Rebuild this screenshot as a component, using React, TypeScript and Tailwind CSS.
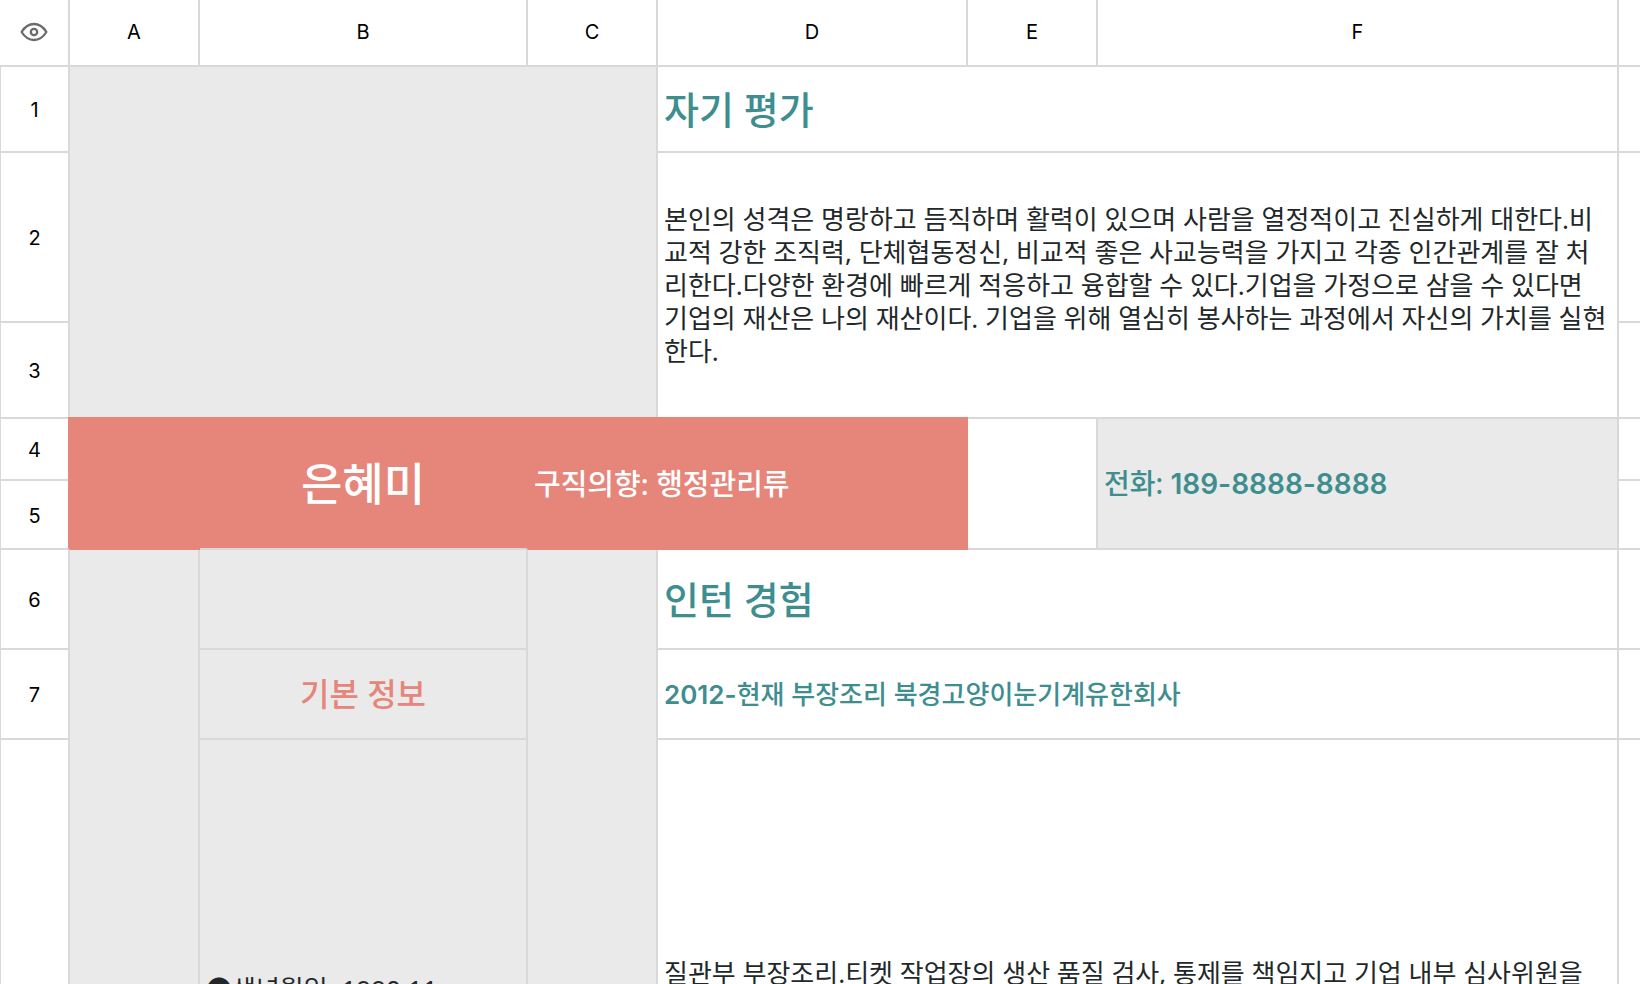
import type { ReactNode } from "react";

const line = "border-r-2 border-b-2 border-[#d9d9d9]";
const edge = "border-b-2 border-[#d9d9d9] bg-white p-0";
const headText = "px-0 text-center align-middle font-[Inter,sans-serif] text-xl font-normal text-black";
const head = `${line} ${headText} pt-0 pb-0.5`;
const gray = `${line} bg-[#eaeaea] p-0`;
const white = `${line} bg-white p-0`;
const coral = "border-r-2 border-b-2 bg-[#e6857a] p-0 text-white shadow-[-2px_-2px_0_#e6857a,0_-2px_0_#e6857a]";

function Lines({ items }: { items: string[] }) {
  return (
    <p className="text-[26px] leading-[33px] whitespace-nowrap text-[#222829]">
      {items.map((t) => (
        <span key={t} className="block">{t}</span>
      ))}
    </p>
  );
}

function RowHead({ children, besideBanner = false }: { children: ReactNode; besideBanner?: boolean }) {
  return (
    <th
      scope="row"
      className={`border-r-2 border-b-2 border-l border-[#d9d9d9] ${headText} pt-0.5 pb-0 ${besideBanner ? "border-r-[#e6857a]" : ""}`}
    >
      {children}
    </th>
  );
}

function Heading({ children }: { children: ReactNode }) {
  return <h2 className="px-1.5 text-[38px] leading-[48px] font-medium text-[#3e8e8f]">{children}</h2>;
}

function Num({ children }: { children: ReactNode }) {
  return <span className="font-[Inter,sans-serif] font-semibold">{children}</span>;
}

const about = [
  "본인의 성격은 명랑하고 듬직하며 활력이 있으며 사람을 열정적이고 진실하게 대한다.비",
  "교적 강한 조직력, 단체협동정신, 비교적 좋은 사교능력을 가지고 각종 인간관계를 잘 처",
  "리한다.다양한 환경에 빠르게 적응하고 융합할 수 있다.기업을 가정으로 삼을 수 있다면",
  "기업의 재산은 나의 재산이다. 기업을 위해 열심히 봉사하는 과정에서 자신의 가치를 실현",
  "한다.",
];

export default function App() {
  return (
    <main className="h-screen overflow-hidden bg-white font-['Noto_Sans','Noto_Sans_CJK_KR',sans-serif]">
      <table className="w-full table-fixed border-separate border-spacing-0">
        <colgroup>
          <col className="w-[70px]" />
          <col className="w-[130px]" />
          <col className="w-[328px]" />
          <col className="w-[130px]" />
          <col className="w-[310px]" />
          <col className="w-[130px]" />
          <col className="w-[521px]" />
          <col />
        </colgroup>
        <thead>
          <tr className="h-[67px]">
            <th className={head}>
              <button type="button" aria-label="보기" className="block w-full">
                <svg viewBox="0 0 28 20" className="mx-auto h-5 w-7" fill="none" stroke="#6b6b6b" strokeWidth="2.3">
                  <path d="M1.600 10C5 4.500 9 2 14 2s9 2.500 12.400 8C23 15.500 19 18 14 18S5 15.500 1.600 10Z" strokeLinejoin="round" />
                  <circle cx="14" cy="10" r="3.200" />
                </svg>
              </button>
            </th>
            {["A", "B", "C", "D", "E", "F"].map((c) => (
              <th key={c} scope="col" className={head}>{c}</th>
            ))}
            <td className={edge} />
          </tr>
        </thead>
        <tbody>
          <tr className="h-[86px]">
            <RowHead>1</RowHead>
            <td colSpan={3} rowSpan={3} className={gray} />
            <td colSpan={3} className={white}>
              <Heading>자기 평가</Heading>
            </td>
            <td className={edge} />
          </tr>
          <tr className="h-[170px]">
            <RowHead>2</RowHead>
            <td colSpan={3} rowSpan={2} className={white}>
              <div className="px-1.5"><Lines items={about} /></div>
            </td>
            <td className={edge} />
          </tr>
          <tr className="h-24">
            <RowHead>3</RowHead>
            <td className={edge} />
          </tr>
          <tr className="h-[62px]">
            <RowHead besideBanner>4</RowHead>
            <td rowSpan={2} className={`${coral} border-[#e6857a]`} />
            <td rowSpan={2} className={`${coral} border-r-[#e29186] border-b-[#d9d9d9] text-center text-[45px] leading-[52px] font-medium`}>은혜미</td>
            <td colSpan={2} rowSpan={2} className={`${coral} border-[#e6857a]`}>
              <p className="px-1.5 text-[29px] leading-9 font-medium">구직의향: 행정관리류</p>
            </td>
            <td rowSpan={2} className={white} />
            <td rowSpan={2} className={gray}>
              <p className="px-1.5 text-[28px] leading-9 font-medium text-[#3e8e8f]">전화: <Num>189-8888-8888</Num></p>
            </td>
            <td className={edge} />
          </tr>
          <tr className="h-[69px]">
            <RowHead besideBanner>5</RowHead>
            <td className={edge} />
          </tr>
          <tr className="h-[100px]">
            <RowHead>6</RowHead>
            <td rowSpan={3} className={gray} />
            <td className={gray} />
            <td rowSpan={3} className={gray} />
            <td colSpan={3} className={white}>
              <Heading>인턴 경험</Heading>
            </td>
            <td className={edge} />
          </tr>
          <tr className="h-[90px]">
            <RowHead>7</RowHead>
            <td className={`${gray} text-center text-[32px] font-medium text-[#e6857a]`}>기본 정보</td>
            <td colSpan={3} className={white}>
              <p className="px-1.5 text-[26px] leading-9 font-medium text-[#3e8e8f]"><Num>2012-</Num>현재 부장조리 북경고양이눈기계유한회사</p>
            </td>
            <td className={edge} />
          </tr>
          <tr className="h-[506px]">
            <RowHead>8</RowHead>
            <td className={`${gray} align-top`}>
              <div className="px-1.5 pt-[233px]"><Lines items={["●생년월일: 1990.11"]} /></div>
            </td>
            <td colSpan={3} className={`${white} align-top`}>
              <div className="px-1.5 pt-[217px]">
                <Lines items={["질관부 부장조리.티켓 작업장의 생산 품질 검사, 통제를 책임지고 기업 내부 심사위원을"]} />
              </div>
            </td>
            <td className={edge} />
          </tr>
        </tbody>
      </table>
    </main>
  );
}
